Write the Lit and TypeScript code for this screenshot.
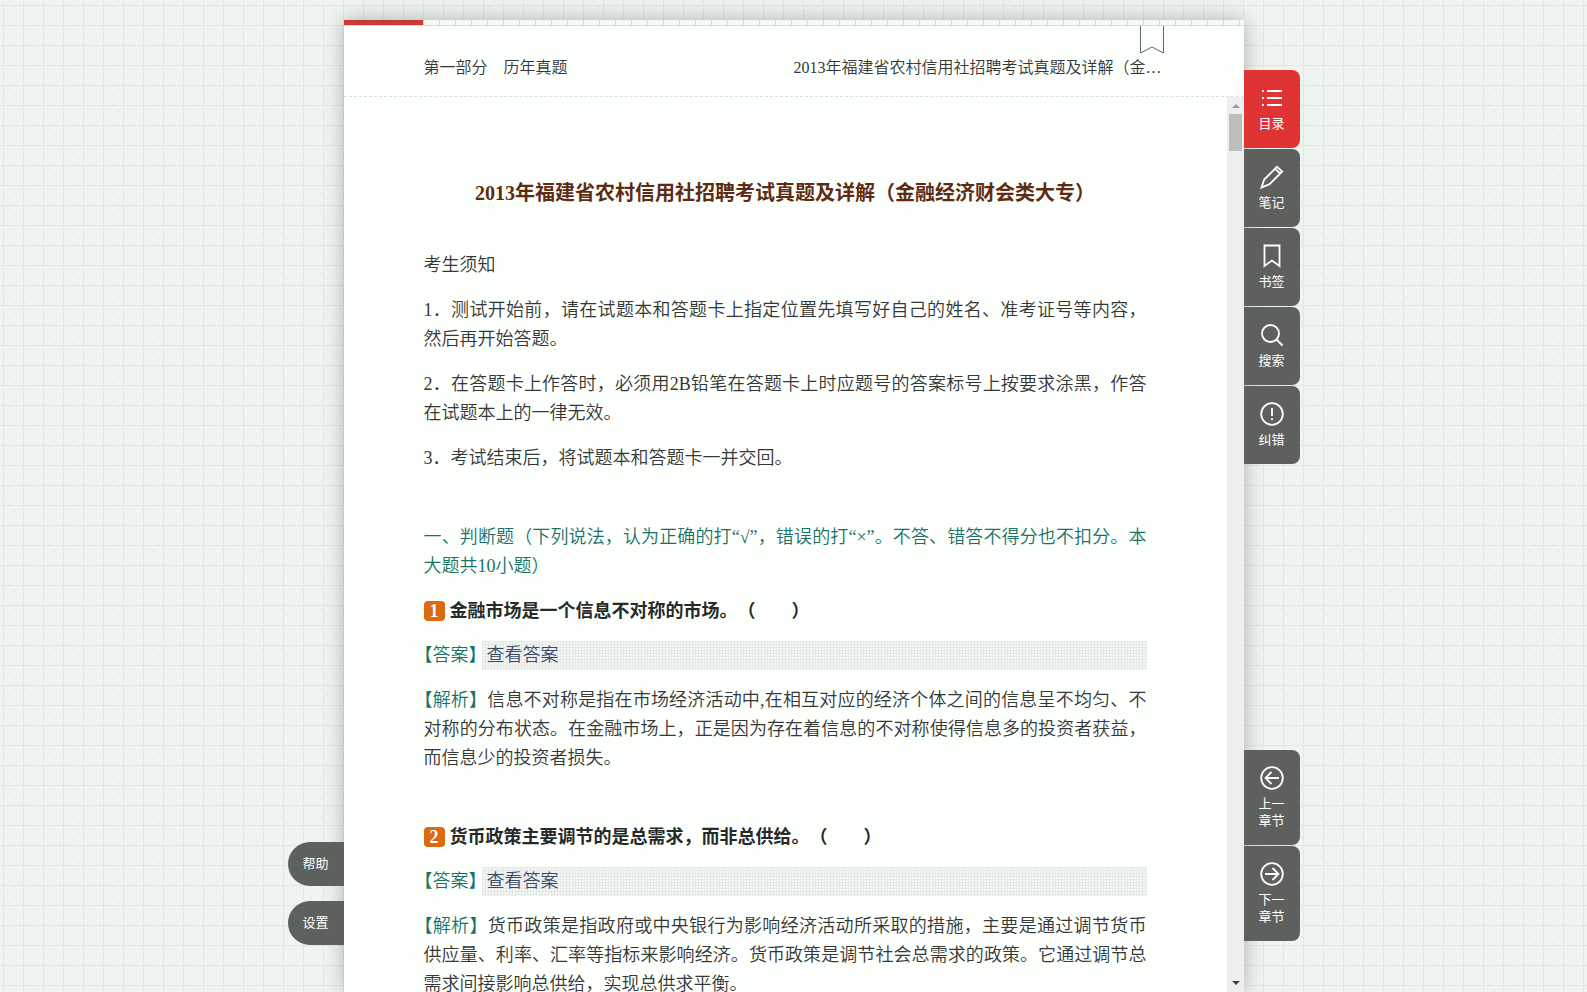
import { LitElement, css, html, svg, nothing } from "lit";
import { customElement, property, state } from "lit/decorators.js";
import { classMap } from "lit/directives/class-map.js";

type IconName = "list" | "pencil" | "bookmark" | "search" | "alert" | "prev" | "next";

const ICONS: Record<IconName, unknown> = {
  list: svg`<path d="M2 5h2M2 12h2M2 19h2M7 5h15M7 12h15M7 19h15"/>`,
  pencil: svg`<path d="M1.500 22.500L4.200 14.500L17 1.800L22.200 6.500L9.500 19.200ZM15 3.800L20.200 8.500"/>`,
  bookmark: svg`<path d="M4.500 1.500h15v20.500l-7.500-5.500l-7.500 5.500z"/>`,
  search: svg`<circle cx="10.500" cy="10.500" r="8.500"/><path d="M16.500 16.500L22.500 22.500"/>`,
  alert: svg`<circle cx="12" cy="12" r="10.800"/><path d="M12 6v8M12 16.200v2"/>`,
  prev: svg`<circle cx="12" cy="12" r="10.800"/><path d="M19 12H5.500M11.500 6L5.500 12l6 6"/>`,
  next: svg`<circle cx="12" cy="12" r="10.800"/><path d="M5 12h13.500M12.500 6l6 6l-6 6"/>`,
};

interface Tool {
  icon: IconName;
  lines: string[];
}

const TOOLS: Tool[] = [
  { icon: "list", lines: ["目录"] },
  { icon: "pencil", lines: ["笔记"] },
  { icon: "bookmark", lines: ["书签"] },
  { icon: "search", lines: ["搜索"] },
  { icon: "alert", lines: ["纠错"] },
];

const CHAPTERS: Tool[] = [
  { icon: "prev", lines: ["上一", "章节"] },
  { icon: "next", lines: ["下一", "章节"] },
];

const NOTICE = [
  "考生须知",
  "1．测试开始前，请在试题本和答题卡上指定位置先填写好自己的姓名、准考证号等内容，然后再开始答题。",
  "2．在答题卡上作答时，必须用2B铅笔在答题卡上时应题号的答案标号上按要求涂黑，作答在试题本上的一律无效。",
  "3．考试结束后，将试题本和答题卡一并交回。",
];

interface Question {
  text: string;
  analysis: string;
}

const QUESTIONS: Question[] = [
  {
    text: "金融市场是一个信息不对称的市场。（　　）",
    analysis:
      "信息不对称是指在市场经济活动中,在相互对应的经济个体之间的信息呈不均匀、不对称的分布状态。在金融市场上，正是因为存在着信息的不对称使得信息多的投资者获益，而信息少的投资者损失。",
  },
  {
    text: "货币政策主要调节的是总需求，而非总供给。（　　）",
    analysis:
      "货币政策是指政府或中央银行为影响经济活动所采取的措施，主要是通过调节货币供应量、利率、汇率等指标来影响经济。货币政策是调节社会总需求的政策。它通过调节总需求间接影响总供给，实现总供求平衡。",
  },
];

@customElement("tool-button")
export class ToolButton extends LitElement {
  @property() icon: IconName = "list";
  @property({ attribute: false }) lines: string[] = [];
  @property({ type: Boolean }) active = false;

  static styles = css`
    :host {
      display: block;
    }
    .tool {
      display: flex;
      flex-direction: column;
      align-items: center;
      gap: 4px;
      width: 56px;
      padding: 16px 0 17px;
      border: 0;
      border-radius: 0 8px 8px 0;
      background: #5e605e;
      color: #fff;
      font: 13px/17px "Noto Sans CJK SC", sans-serif;
      cursor: pointer;
    }
    .tool.active {
      background: #e03434;
    }
    .icon {
      width: 24px;
      height: 24px;
      fill: none;
      stroke: currentColor;
      stroke-width: 1.8;
    }
    .label {
      display: block;
    }
  `;

  render() {
    return html`
      <button type="button" class=${classMap({ tool: true, active: this.active })}>
        <svg class="icon" viewBox="0 0 24 24" aria-hidden="true">${ICONS[this.icon]}</svg>
        <span>${this.lines.map((line) => html`<span class="label">${line}</span>`)}</span>
      </button>
    `;
  }
}

@customElement("exam-question")
export class ExamQuestion extends LitElement {
  @property({ type: Number }) number = 1;
  @property({ attribute: false }) question?: Question;

  static styles = css`
    :host {
      display: block;
    }
    .title,
    .analysis {
      margin: 0 0 16px;
      font-size: 18px;
      line-height: 29px;
    }
    .title {
      display: flex;
      align-items: flex-start;
      gap: 5px;
      margin-bottom: 15px;
      color: #262a28;
    }
    .badge {
      width: 21px;
      margin-top: 4px;
      border-radius: 4px;
      background: #dc6a0f;
      color: #fff;
      line-height: 20px;
      text-align: center;
    }
    .answer {
      display: flex;
      margin-bottom: 16px;
      line-height: 29px;
    }
    .tag {
      color: #1a7266;
    }
    .answer .tag {
      flex: none;
      margin-left: -9px;
    }
    .reveal {
      flex: 1;
      margin: 0 0 0 -5px;
      padding: 0 5px 2px;
      border: 0;
      background:
        repeating-linear-gradient(90deg, #e4e9e6 0 1px, transparent 1px 3px),
        repeating-linear-gradient(#e4e9e6 0 1px, #f4f7f5 1px 3px);
      color: #3c4868;
      font: inherit;
      line-height: 26px;
      text-align: left;
      cursor: pointer;
    }
    .analysis {
      margin-bottom: 50px;
      text-align: justify;
      text-indent: -9px;
    }
  `;

  render() {
    if (!this.question) return nothing;
    return html`
      <h3 class="title"><span class="badge">${this.number}</span><span>${this.question.text}</span></h3>
      <div class="answer">
        <span class="tag">【答案】</span><button type="button" class="reveal">查看答案</button>
      </div>
      <p class="analysis"><span class="tag">【解析】</span>${this.question.analysis}</p>
    `;
  }
}

@customElement("app-root")
export class AppRoot extends LitElement {
  @state() private active = 0;

  static styles = css`
    :host {
      display: flex;
      height: 100vh;
      overflow: hidden;
      background:
        linear-gradient(90deg, #e1e7e3 1px, transparent 1px) 3px 5px / 20px 20px,
        linear-gradient(#e1e7e3 1px, transparent 1px) 3px 5px / 20px 20px,
        repeating-linear-gradient(45deg, #eaefec66 0 1px, transparent 1px 7px),
        repeating-linear-gradient(135deg, #eaefec66 0 1px, transparent 1px 7px),
        #f1f5f2;
      color: #343836;
      font-family: "Liberation Serif", "Noto Sans CJK SC", serif;
      font-size: 18px;
      font-weight: 350;
      text-spacing-trim: space-all;
    }
    .side {
      display: flex;
      flex: 1 0 56px;
      flex-direction: column;
      z-index: 1;
    }
    .left {
      align-items: flex-end;
      justify-content: flex-end;
      gap: 15px;
      padding-bottom: 47px;
    }
    .right {
      align-items: flex-start;
      justify-content: space-between;
      padding: 70px 0 51px;
    }
    .group {
      display: flex;
      flex-direction: column;
      gap: 1px;
    }
    .pill {
      width: 56px;
      height: 44px;
      padding: 0 0 3px;
      border: 0;
      border-radius: 22px 0 0 22px;
      background: #5e605e;
      color: #fff;
      font: 13px/17px "Noto Sans CJK SC", sans-serif;
      cursor: pointer;
    }
    .page {
      display: flex;
      flex: 0 1 900px;
      flex-direction: column;
      min-width: 0;
      margin-top: 20px;
      background: #fdfffd;
      box-shadow: 0 0 20px #00000048;
    }
    .ruler {
      height: 5px;
      border-bottom: 1px solid #d8dcd9;
      background: repeating-linear-gradient(90deg, transparent 0 15px, #d4d8d5 15px 16px) #f6f8f6;
    }
    .progress {
      width: 79px;
      height: 5px;
      background: #c93a38;
    }
    .head {
      display: flex;
      justify-content: space-between;
      gap: 16px;
      padding: 30px 80px 16px;
      border-bottom: 1px dashed #dde1de;
      position: relative;
      font-size: 16px;
      line-height: 24px;
    }
    .part {
      white-space: nowrap;
    }
    .chapter {
      flex: 0 1 370px;
      overflow: hidden;
      text-overflow: ellipsis;
      white-space: nowrap;
    }
    .ribbon {
      position: absolute;
      top: 0;
      right: 79px;
      padding: 0;
      border: 0;
      background: none;
      line-height: 0;
      cursor: pointer;
    }
    .ribbon svg {
      width: 26px;
      height: 28px;
      fill: none;
      stroke: #606462;
    }
    .body {
      display: flex;
      flex: 1;
      min-height: 0;
    }
    .scroll {
      flex: 1;
      overflow-y: auto;
      padding: 80px 80px 0;
      scrollbar-width: none;
    }
    .bar {
      display: flex;
      flex: 0 0 17px;
      flex-direction: column;
      align-items: center;
      background: #eeefee;
    }
    .arrow {
      width: 17px;
      height: 17px;
      padding: 0;
      border: 0;
      background: none;
      line-height: 0;
      fill: #9a9c9a;
    }
    .arrow.down {
      margin-top: auto;
      fill: #3e403e;
    }
    .thumb {
      width: 13px;
      height: 37px;
      background: #bcbebc;
    }
    h1 {
      margin: 0 0 42px;
      color: #5e2c12;
      font-size: 20px;
      line-height: 32px;
      text-align: center;
    }
    p,
    h2 {
      margin: 0 0 16px;
      font-size: 18px;
      font-weight: inherit;
      line-height: 29px;
      text-align: justify;
    }
    h2 {
      padding-top: 34px;
      color: #1a7266;
    }
  `;

  render() {
    return html`
      <aside class="side left">
        <button type="button" class="pill">帮助</button>
        <button type="button" class="pill">设置</button>
      </aside>
      <main class="page">
        <div class="ruler"><div class="progress"></div></div>
        <header class="head">
          <span class="part">第一部分　历年真题</span>
          <span class="chapter">2013年福建省农村信用社招聘考试真题及详解（金融经济财会类大专）</span>
          <button type="button" class="ribbon" aria-label="书签">
            <svg viewBox="0 0 26 28"><path d="M1.500 0v27l11.500-6l11.500 6V0"/></svg>
          </button>
        </header>
        <div class="body">
          <article class="scroll">
            <h1>2013年福建省农村信用社招聘考试真题及详解（金融经济财会类大专）</h1>
            ${NOTICE.map((line) => html`<p>${line}</p>`)}
            <h2>一、判断题（下列说法，认为正确的打“√”，错误的打“×”。不答、错答不得分也不扣分。本大题共10小题）</h2>
            ${QUESTIONS.map(
              (q, i) => html`<exam-question .number=${i + 1} .question=${q}></exam-question>`,
            )}
          </article>
          <div class="bar">
            <button type="button" class="arrow" aria-label="向上滚动">
              <svg width="17" height="17"><path d="M5 11h8L9 7z"/></svg>
            </button>
            <div class="thumb"></div>
            <button type="button" class="arrow down" aria-label="向下滚动">
              <svg width="17" height="17"><path d="M5 6h8L9 10z"/></svg>
            </button>
          </div>
        </div>
      </main>
      <aside class="side right">
        <nav class="group">
          ${TOOLS.map(
            (t, i) => html`<tool-button
              .icon=${t.icon}
              .lines=${t.lines}
              .active=${i === this.active}
              @click=${() => (this.active = i)}
            ></tool-button>`,
          )}
        </nav>
        <nav class="group">
          ${CHAPTERS.map((t) => html`<tool-button .icon=${t.icon} .lines=${t.lines}></tool-button>`)}
        </nav>
      </aside>
    `;
  }
}
